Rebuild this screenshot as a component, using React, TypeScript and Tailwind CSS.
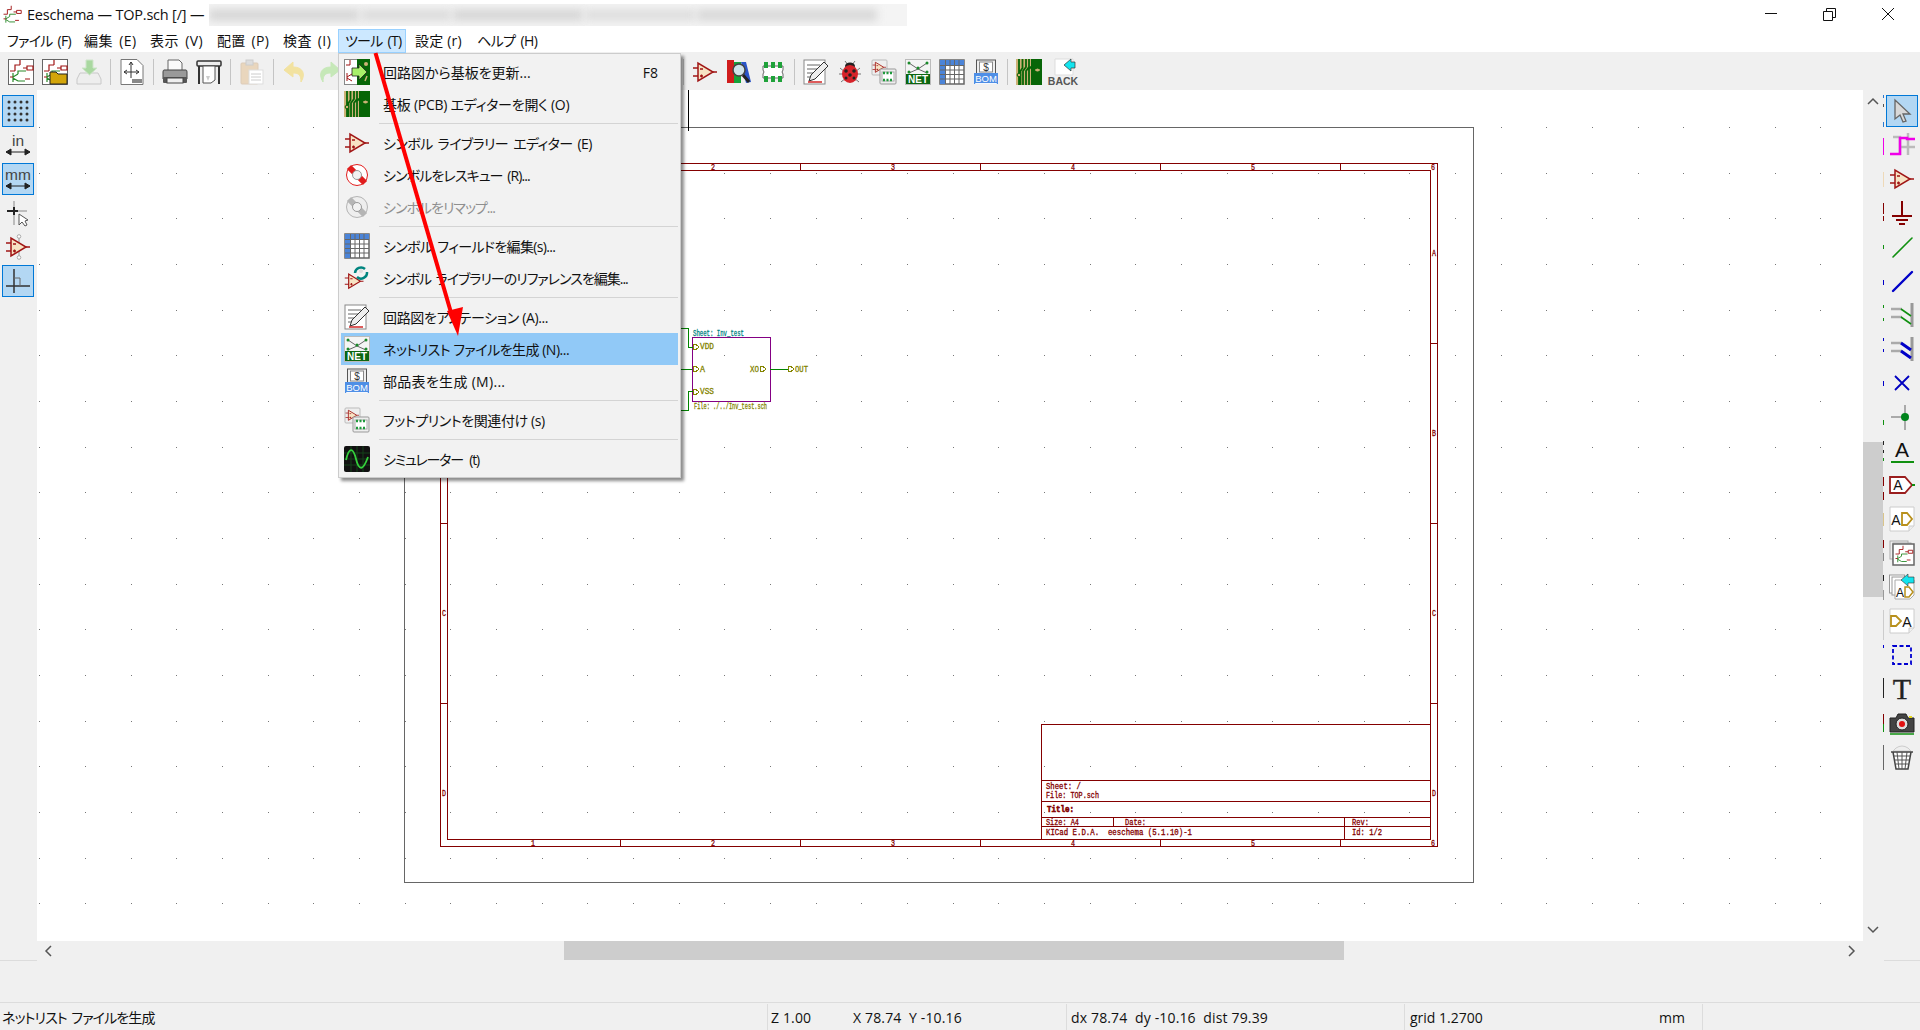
import React from 'react';

const MAROON = '#840000';
const Svg: React.FC<{ size?: number; children: React.ReactNode }> = ({ size = 26, children }) => (
  <svg width={size} height={size} viewBox="0 0 26 26" className="block shrink-0 overflow-visible">{children}</svg>
);

const SymbolShape = () => (
  <g>
    <polygon points="6,4 6,22 21,13" fill="#f7e3c4" stroke="#a01515" strokeWidth="1.5" />
    <path d="M1 9h5M1 17h5M21 13h4M8 10h3M8 17h3M9.500 15.500v3" stroke="#a01515" strokeWidth="1.3" fill="none" />
  </g>
);
const SymbolIcon = () => <Svg><SymbolShape /></Svg>;

const SchContent = () => (
  <g fill="none" strokeWidth="1.2">
    <path d="M12 1v5M12 6h-5v6M7 12h-5M15 9h4M19 7h6v4h-6z" stroke="#a01515" />
    <path d="M5 14v9M5 18l5-3M5 19l5 3M10 15v-3h8M10 22h7" stroke="#2a8a2a" />
    <path d="M2 18h3M17 20h5" stroke="#a01515" />
  </g>
);
const NewSch = () => (
  <Svg>
    <rect x="0.500" y="0.500" width="25" height="25" fill="#fff" stroke="#666" />
    <SchContent />
  </Svg>
);
const OpenSch = () => (
  <Svg>
    <rect x="0.500" y="0.500" width="25" height="25" fill="#fff" stroke="#666" />
    <SchContent />
    <path d="M8 13h6l2 2h9v10H8z" fill="#d3a50a" stroke="#222" />
  </Svg>
);
const SaveIcon = () => (
  <Svg>
    <path d="M4 14h18l3 6v5H1v-5z" fill="#eee" stroke="#c8c8c8" />
    <path d="M10 1h7v8h4l-7.500 7L6 9h4z" fill="#a9d8a0" stroke="#cfe5cb" />
  </Svg>
);
const PageIcon = () => (
  <Svg>
    <path d="M2 .500h16l6 6v19H2z" fill="#fff" stroke="#777" />
    <path d="M12 3v16M5 13h15M12 3l-2 3M12 3l2 3M5 13l3-2M5 13l3 2M20 13l-3-2M20 13l-3 2" stroke="#333" fill="none" />
    <rect x="13" y="20" width="10" height="4" fill="#888" />
  </Svg>
);
const PrintIcon = () => (
  <Svg>
    <path d="M6 1h11l3 3v8H6z" fill="#fafafa" stroke="#666" />
    <path d="M2 11h22q1 0 1 2v7H1v-7q0-2 1-2z" fill="#999" stroke="#444" />
    <rect x="1" y="18" width="24" height="6" rx="1" fill="#555" />
    <rect x="5" y="19" width="16" height="5" fill="#eee" stroke="#444" />
  </Svg>
);
const PlotIcon = () => (
  <Svg>
    <rect x="1" y="2" width="24" height="5" rx="1" fill="#eee" stroke="#333" strokeWidth="1.500" />
    <path d="M3 7v18M23 7v18" stroke="#333" strokeWidth="2" />
    <path d="M7 7h12v14l-4 3H7z" fill="#fff" stroke="#555" />
    <path d="M10 17h4l-2 5z" fill="#ccc" />
  </Svg>
);
const PasteIcon = () => (
  <Svg>
    <rect x="2" y="4" width="17" height="21" rx="1" fill="#e9d6bd" stroke="#dccbb8" />
    <rect x="7" y="1" width="7" height="5" fill="#ddd" stroke="#ccc" />
    <rect x="10" y="11" width="14" height="14" fill="#fff" stroke="#ddd" />
    <path d="M12 15h10M12 18h10M12 21h10" stroke="#ccc" />
  </Svg>
);
const UndoIcon: React.FC<{ color: string; flip?: boolean }> = ({ color, flip }) => (
  <Svg>
    <g transform={flip ? 'translate(26 0) scale(-1 1)' : undefined}>
      <path d="M11 3L2 11l9 7v-4c6 0 8 2 8 9 5-8 2-15-8-15z" fill={color} stroke={color} strokeLinejoin="round" />
    </g>
  </Svg>
);
const PcbIcon = () => (
  <Svg>
    <rect width="26" height="26" fill="#cdb277" />
    <path d="M15 0h11v26H15z" fill="#076507" />
    <path d="M3 0v26M6.500 0v9l-2 3v14M10 0v8l-3 4v14M13 0v8l-3 4v14M16 0v7l-3 3v16" stroke="#076507" strokeWidth="1.800" fill="none" />
    <path d="M19 11h5" stroke="#cdb277" strokeWidth="1.300" />
    <circle cx="21.500" cy="11" r="1.600" fill="#cdb277" />
    <circle cx="3" cy="16" r="1.800" fill="#cdb277" stroke="#076507" />
  </Svg>
);
const UpdatePcb = () => (
  <Svg>
    <rect x="0.500" y="0.500" width="13" height="25" fill="#fff" stroke="#888" />
    <rect x="13" width="13" height="26" fill="#076507" />
    <path d="M6 1v5H2M3 14v8M3 18l5-3M3 19l5 3" stroke="#a01515" fill="none" />
    <circle cx="22" cy="5" r="2" fill="#cdb277" />
    <path d="M21 22l2-5" stroke="#cdb277" strokeWidth="1.500" />
    <path d="M8 9h7V5l8 8-8 8v-4H8z" fill="#a8f06a" stroke="#222" strokeWidth="0.800" />
  </Svg>
);
const Buoy: React.FC<{ a: string; b: string }> = ({ a, b }) => (
  <Svg>
    <circle cx="13" cy="13" r="10" fill={b} stroke={b} strokeWidth="2" />
    <path d="M5 5l6 6M15 15l6 6" stroke={a} strokeWidth="6" />
    <circle cx="13" cy="13" r="10.500" fill="none" stroke={a} strokeWidth="1" />
    <circle cx="13" cy="13" r="4.500" fill="#f2f2f2" stroke="#999" />
  </Svg>
);
const TableIcon = () => (
  <Svg>
    <rect x="1" y="1" width="24" height="24" fill="#fff" stroke="#666" strokeWidth="1.500" />
    <rect x="1" y="1" width="24" height="5" fill="#4b84d8" />
    <rect x="1" y="1" width="5" height="24" fill="#4b84d8" />
    <path d="M6.500 1v24M11 1v24M15.500 1v24M20 1v24M1 6.500h24M1 11h24M1 15.500h24M1 20h24" stroke="#666" fill="none" />
  </Svg>
);
const SymRefIcon = () => (
  <Svg>
    <g transform="translate(0 6) scale(.78)"><SymbolShape /></g>
    <path d="M11 8a6 6 0 0 1 10-4M23 7a6 6 0 0 1-10 5" fill="none" stroke="#00857f" strokeWidth="2.500" />
    <circle cx="17" cy="6" r="2" fill="#ddd" />
  </Svg>
);
const AnnotateIcon = () => (
  <Svg>
    <rect x="1" y="1" width="21" height="24" fill="#fff" stroke="#888" />
    <path d="M4 6h13M4 10h10M4 14h7M4 18h4" stroke="#666" fill="none" />
    <path d="M21 3l4 4L12 20l-6 2 2-6z" fill="#eee" stroke="#333" />
    <path d="M5 23h14" stroke="#d01616" strokeWidth="1.400" />
  </Svg>
);
const NetIcon = () => (
  <Svg>
    <rect x="0.500" y="0.500" width="25" height="25" fill="#f4f4f4" stroke="#bbb" />
    <path d="M4 4l9 6 9-6M4 14l9-4 9 4" stroke="#666" fill="none" />
    <g fill="#1a8a2a">
      <circle cx="4" cy="4" r="1.500" /><circle cx="22" cy="4" r="1.500" /><circle cx="13" cy="9" r="1.500" />
      <circle cx="4" cy="13" r="1.500" /><circle cx="22" cy="13" r="1.500" />
    </g>
    <rect x="1" y="15" width="24" height="10" fill="#0b660f" />
    <text x="13" y="24" textAnchor="middle" fontSize="10" fontWeight="700" fill="#fff" fontFamily="Liberation Sans, sans-serif">NET</text>
  </Svg>
);
const BomIcon = () => (
  <Svg>
    <rect x="3.500" y="1" width="19" height="14" fill="#eee" stroke="#555" />
    <rect x="6.500" y="3" width="13" height="10" fill="#fff" stroke="#888" />
    <text x="13" y="12" textAnchor="middle" fontSize="10" fill="#333" fontFamily="Liberation Sans, sans-serif">$</text>
    <rect x="1" y="14" width="24" height="11" fill="#4f8fe6" />
    <text x="13" y="23" textAnchor="middle" fontSize="9.500" fill="#fff" textDecoration="underline" fontFamily="Liberation Sans, sans-serif">BOM</text>
  </Svg>
);
const CvpcbIcon = () => (
  <Svg>
    <rect x="1" y="1" width="15" height="15" rx="1" fill="#eee" stroke="#bbb" />
    <g transform="translate(1 1) scale(.56)"><SymbolShape /></g>
    <rect x="9" y="10" width="16" height="15" rx="1" fill="#eee" stroke="#999" />
    <rect x="11" y="13" width="12" height="9" fill="#fff" stroke="#aaa" />
    <path d="M12 14h2M15.500 14h2M19 14h2M12 21h2M15.500 21h2M19 21h2" stroke="#1f9a3c" strokeWidth="2.500" />
  </Svg>
);
const SimIcon = () => (
  <Svg>
    <rect width="26" height="26" rx="2" fill="#111" />
    <path d="M0 7h26M0 13h26M0 19h26M7 0v26M13 0v26M19 0v26" stroke="#14431a" />
    <path d="M2 14C5 1 9 1 12 13s7 12 12-2" fill="none" stroke="#35d03c" strokeWidth="1.800" />
  </Svg>
);
const LibBrowser = () => (
  <Svg>
    <rect x="1" y="1" width="7" height="23" fill="#d01c1c" />
    <rect x="8" y="3" width="7" height="21" fill="#17a23a" />
    <path d="M15 3l5 0 5 20-5 1z" fill="#2a55c8" />
    <circle cx="13" cy="11" r="6" fill="#cfe3ea" stroke="#444" strokeWidth="1.500" />
    <path d="M17 16l6 7" stroke="#222" strokeWidth="3" />
  </Svg>
);
const ChipIcon = () => (
  <Svg>
    <path d="M3 7h20v4l-1 2 1 2v4H3v-4l1-2-1-2z" fill="#fff" stroke="#666" />
    <g fill="#1fa23a">
      <rect x="4" y="3" width="4" height="6" /><rect x="11" y="3" width="4" height="6" /><rect x="18" y="3" width="4" height="6" />
      <rect x="4" y="17" width="4" height="6" /><rect x="11" y="17" width="4" height="6" /><rect x="18" y="17" width="4" height="6" />
    </g>
  </Svg>
);
const BugIcon = () => (
  <Svg>
    <path d="M3 9l5 4M23 9l-5 4M2 15h5M24 15h-5M4 23l5-4M22 23l-5-4M8 2l3 4M18 2l-3 4" stroke="#777" fill="none" />
    <ellipse cx="13" cy="7" rx="5" ry="3.500" fill="#222" />
    <ellipse cx="13" cy="15" rx="8" ry="9" fill="#d6232a" />
    <g fill="#222"><circle cx="9" cy="12" r="1.800" /><circle cx="17" cy="12" r="1.800" /><circle cx="13" cy="16" r="1.800" /><circle cx="9" cy="19" r="1.500" /><circle cx="17" cy="19" r="1.500" /></g>
  </Svg>
);
const BackIcon = () => (
  <Svg>
    <path d="M5 0h18v16H5z" fill="#fff" stroke="#ddd" />
    <path d="M14 6l7-6v3h4v6h-4v3z" fill="#12e4ee" stroke="#333" strokeWidth="0.700" />
    <text x="13" y="25.500" textAnchor="middle" fontSize="10.500" fontWeight="700" fill="#555" fontFamily="Liberation Sans, sans-serif">BACK</text>
  </Svg>
);

// left toolbar
const GridIcon = () => (
  <Svg>
    {[4, 10, 16, 22].flatMap((y) => [4, 10, 16, 22].map((x) => <circle key={`${x}-${y}`} cx={x} cy={y} r="1.500" fill="#333" />))}
  </Svg>
);
const UnitIcon: React.FC<{ t: string }> = ({ t }) => (
  <Svg>
    <text x="13" y="14" textAnchor="middle" fontSize="15.500" fill="#444" fontFamily="Liberation Sans, sans-serif">{t}</text>
    <path d="M1 20h24M1 20l5-3v6zM25 20l-5-3v6z" stroke="#222" fill="#222" />
  </Svg>
);
const CursorCross = () => (
  <Svg>
    <path d="M9 1v8M9 13v12M13 11h9" stroke="#aaa" strokeWidth="1.500" />
    <path d="M2 11h11M9 7v8" stroke="#222" strokeWidth="2" />
    <path d="M14 14l0 11 3-3 3 4 2-1-2-4 3-1z" fill="#fff" stroke="#555" />
  </Svg>
);
const SymPinIcon = () => (
  <Svg>
    <path d="M14 2v22" stroke="#aaa" strokeWidth="1.300" />
    <circle cx="14" cy="2.500" r="1.800" fill="#fff" stroke="#aaa" />
    <circle cx="14" cy="23.500" r="1.800" fill="#fff" stroke="#aaa" />
    <SymbolShape />
  </Svg>
);
const AngleIcon = () => (
  <Svg>
    <path d="M9 1v24M1 18h24" stroke="#333" strokeWidth="1.500" fill="none" />
    <path d="M9 10h6v8" stroke="#666" fill="none" />
  </Svg>
);

// right toolbar
const ArrowIcon = () => (
  <Svg><path d="M6 2v19l5-4 3 7 3-1-3-7h7z" fill="#d8d8d8" stroke="#666" strokeWidth="1.300" /></Svg>
);
const HighlightIcon = () => (
  <Svg>
    <path d="M4 5h7v18M19 1v22M10 15h16" stroke="#bbb" strokeWidth="2.500" fill="none" />
    <path d="M1 22h10V6h7v1h8" stroke="#f000e8" strokeWidth="2.500" fill="none" />
  </Svg>
);
const PowerIcon = () => (
  <Svg><path d="M13 1v15M3 16h20M7 20h12M10 24h6" stroke="#840000" strokeWidth="2" fill="none" /></Svg>
);
const WireLine: React.FC<{ c: string; w: number }> = ({ c, w }) => (
  <Svg><path d="M4 23L23 4" stroke={c} strokeWidth={w} strokeLinecap="round" /></Svg>
);
const EntryIcon: React.FC<{ c: string; w: number }> = ({ c, w }) => (
  <Svg>
    <path d="M23 1v24" stroke="#999" strokeWidth="3" />
    <path d="M2 7h11M2 15h11" stroke="#aaa" strokeWidth="2.500" />
    <path d="M12 7l10 7M12 15l10 7" stroke={c} strokeWidth={w} />
  </Svg>
);
const NoConn = () => <Svg><path d="M6 6l14 14M20 6L6 20" stroke="#0000c0" strokeWidth="1.800" /></Svg>;
const Junction = () => (
  <Svg>
    <path d="M16 1v25M2 13h14" stroke="#aaa" strokeWidth="2" />
    <circle cx="16" cy="13" r="4" fill="#00841c" />
  </Svg>
);
const Letter: React.FC<{ x: number; y: number; s: number }> = ({ x, y, s }) => (
  <text x={x} y={y} textAnchor="middle" fontSize={s} fill="#111" fontFamily="Liberation Sans, sans-serif">A</text>
);
const LabelIcon = () => (
  <Svg><Letter x={13} y={19} s={21} /><path d="M2 24h23" stroke="#109010" strokeWidth="2" /></Svg>
);
const GlobalIcon = () => (
  <Svg>
    <path d="M1 5h15l7 8-7 8H1z" fill="#fff" stroke="#9a1d1d" strokeWidth="1.800" />
    <path d="M23 13h3" stroke="#109010" strokeWidth="2" />
    <Letter x={9} y={18} s={14} />
  </Svg>
);
const SheetPage: React.FC<{ children: React.ReactNode }> = ({ children }) => (
  <>
    <path d="M1 1h24v19l-5 5H1z" fill="#fff" stroke="#ccc" />
    <path d="M25 20h-5v5" fill="#eee" stroke="#ccc" />
    {children}
  </>
);
const HierIcon = () => (
  <Svg>
    <SheetPage>
      <Letter x={7} y={19} s={14} />
      <path d="M13 7h5l5 6-5 6h-5z" fill="#fff" stroke="#b8901c" strokeWidth="1.800" />
    </SheetPage>
  </Svg>
);
const HierPin = () => (
  <Svg>
    <SheetPage>
      <path d="M2 8h5l5 5-5 5H2z" fill="#fff" stroke="#b8901c" strokeWidth="1.800" />
      <Letter x={18} y={19} s={14} />
    </SheetPage>
  </Svg>
);
const SheetIcon = () => (
  <Svg>
    <rect x="1" y="1" width="18" height="18" fill="#eee" stroke="#aaa" />
    <rect x="4" y="3" width="18" height="19" fill="#eee" stroke="#aaa" />
    <rect x="4" y="4" width="21" height="21" fill="#fff" stroke="#666" strokeWidth="1.500" />
    <g transform="translate(5 5) scale(.75)"><SchContent /></g>
  </Svg>
);
const ImportIcon = () => (
  <Svg>
    <rect x="0.500" y="1" width="15" height="18" fill="#fff" stroke="#999" />
    <rect x="3" y="3" width="15" height="18" fill="#fff" stroke="#999" />
    <path d="M6 6h19v15l-4 4H6z" fill="#fff" stroke="#aaa" />
    <Letter x={11} y={23} s={12} />
    <path d="M16 13h4l4 5-4 5h-4z" fill="#fff" stroke="#b8901c" strokeWidth="1.500" />
    <path d="M12 6l7-6v3h6v6h-6v3z" fill="#12e4ee" stroke="#333" strokeWidth="0.600" />
  </Svg>
);
const DashIcon = () => <Svg><rect x="4" y="4" width="18" height="18" fill="none" stroke="#0000d0" strokeWidth="1.800" strokeDasharray="4 2.500" /></Svg>;
const TIcon = () => (
  <Svg><text x="13" y="23" textAnchor="middle" fontSize="30" fill="#222" stroke="#222" strokeWidth="0.300" fontFamily="Liberation Serif, serif">T</text></Svg>
);
const CameraIcon = () => (
  <Svg>
    <path d="M1 8h6l2-4h8l2 4h6v14H1z" fill="#444" stroke="#222" />
    <rect x="20" y="6" width="3" height="2" fill="#e6d71c" />
    <circle cx="13" cy="14" r="6" fill="#ddd" stroke="#222" />
    <circle cx="13" cy="14" r="3" fill="#e01010" />
    <path d="M1 24h24" stroke="#109010" strokeWidth="1.500" />
  </Svg>
);
const TrashIcon = () => (
  <Svg>
    <path d="M7 4q6-4 12 0l3 3H4z" fill="#eee" stroke="#ccc" />
    <path d="M2 8h22M4 8l3 17h12l3-17" fill="#fff" stroke="#444" strokeWidth="1.500" />
    <path d="M8 8l2 17M13 8v17M18 8l-2 17M5 12h16M6 16h14M6.500 20h13" stroke="#555" />
  </Svg>
);

const Sep = () => (
  <div className="flex w-[9px] justify-center"><div className="h-[26px] w-px bg-[#c4c4c4]" /></div>
);
const Tb: React.FC<{ children: React.ReactNode }> = ({ children }) => (
  <div className="flex h-[38px] w-[34px] items-center justify-center">{children}</div>
);

const SideItem: React.FC<{ active?: boolean; children: React.ReactNode }> = ({ active, children }) => (
  <div className="flex h-[34px] items-center justify-center">
    <div className={active ? 'flex h-[32px] w-[32px] items-center justify-center border border-[#0078d7] bg-[#b3d7f3]' : 'flex h-[32px] w-[32px] items-center justify-center'}>
      {children}
    </div>
  </div>
);

const menuBar = [
  { t: 'ファイル (F)', w: 'w-[77px] tracking-[-0.7px]' },
  { t: '編集 (E)', w: 'w-[66px] tracking-[0.5px]' },
  { t: '表示 (V)', w: 'w-[67px] tracking-[0.5px]' },
  { t: '配置 (P)', w: 'w-[66px] tracking-[0.3px]' },
  { t: '検査 (I)', w: 'w-[62px] tracking-[0.4px]' },
];

// the original's kana are narrower than Noto's, hence a tracking per row
type MenuRow = { icon: React.ReactNode; label: string; track: string; key?: string; disabled?: boolean; active?: boolean };
const menuGroups: MenuRow[][] = [
  [
    { icon: <UpdatePcb />, label: '回路図から基板を更新...', track: 'tracking-[0px]', key: 'F8' },
    { icon: <PcbIcon />, label: '基板 (PCB) エディターを開く (O)', track: 'tracking-[-0.25px]' },
  ],
  [
    { icon: <SymbolIcon />, label: 'シンボル ライブラリー エディター (E)', track: 'tracking-[-0.6px] [word-spacing:2px]' },
    { icon: <Buoy a="#e01c1c" b="#fff" />, label: 'シンボルをレスキュー (R)...', track: 'tracking-[-0.9px] [word-spacing:2px]' },
    { icon: <Buoy a="#b5b5b5" b="#eee" />, label: 'シンボルをリマップ...', track: 'tracking-[-1px]' , disabled: true },
  ],
  [
    { icon: <TableIcon />, label: 'シンボル フィールドを編集(s)...', track: 'tracking-[-0.65px] [word-spacing:2px]' },
    { icon: <SymRefIcon />, label: 'シンボル ライブラリーのリファレンスを編集...', track: 'tracking-[-1px] [word-spacing:2px]' },
  ],
  [
    { icon: <AnnotateIcon />, label: '回路図をアノテーション (A)...', track: 'tracking-[-0.35px]' },
    { icon: <NetIcon />, label: 'ネットリスト ファイルを生成 (N)...', track: 'tracking-[-0.5px]', active: true },
    { icon: <BomIcon />, label: '部品表を生成 (M)...', track: 'tracking-[0.3px]' },
  ],
  [{ icon: <CvpcbIcon />, label: 'フットプリントを関連付け (s)', track: 'tracking-[-0.4px]' }],
  [{ icon: <SimIcon />, label: 'シミュレーター (t)', track: 'tracking-[-1.2px] [word-spacing:4px]' }],
];

const rightIcons: React.ReactNode[] = [
  <ArrowIcon />, <HighlightIcon />, <SymbolIcon />, <PowerIcon />, <WireLine c="#109010" w={1.6} />,
  <WireLine c="#0000c8" w={2.4} />, <EntryIcon c="#109010" w={1.6} />, <EntryIcon c="#0000c8" w={3} />,
  <NoConn />, <Junction />, <LabelIcon />, <GlobalIcon />, <HierIcon />, <SheetIcon />, <ImportIcon />,
  <HierPin />, <DashIcon />, <TIcon />, <CameraIcon />, <TrashIcon />,
];

// leftovers of the canvas repaint next to the right toolbar: [y, height, colour]
const slivers: [number, number, string][] = [
  [95, 3, '#2a7ad0'], [104, 3, '#555'], [122, 5, '#2a7ad0'], [138, 17, '#f000e8'], [172, 15, '#eed9b8'],
  [203, 11, MAROON], [216, 5, MAROON], [245, 4, '#109010'], [280, 5, '#0000c8'], [305, 3, '#109010'],
  [318, 3, '#109010'], [338, 3, '#0000c8'], [349, 3, '#0000c8'], [381, 5, '#0000c8'], [420, 5, '#109010'],
  [441, 4, '#222'], [450, 3, '#222'], [458, 3, '#109010'], [477, 9, MAROON], [492, 8, MAROON], [513, 13, '#d9c48a'],
  [540, 8, MAROON], [553, 8, '#888'], [575, 6, '#222'], [590, 10, '#999'], [610, 30, '#ccc'], [645, 3, '#0000d0'],
  [678, 20, '#222'], [714, 10, MAROON], [724, 8, '#109010'], [745, 25, '#666'],
];

const gridX = Array.from({ length: 40 }, (_, i) => Math.round(39.3 + i * 45.67));
const gridY = Array.from({ length: 19 }, (_, i) => Math.round(127 + i * 45.67));

const Stroke: React.FC<{ x: number; y: number; w: number; c?: string; bold?: boolean; children: React.ReactNode }> = ({ x, y, w, c = MAROON, bold, children }) => (
  <text x={x} y={y} textLength={w} lengthAdjust="spacingAndGlyphs" fontSize="8.500" fontWeight={bold ? 700 : 400} fill={c} stroke={c} strokeWidth={bold ? 0.6 : 0.3} fontFamily="Liberation Mono, monospace" xmlSpace="preserve">
    {children}
  </text>
);

const PinMark: React.FC<{ x: number; y: number }> = ({ x, y }) => (
  <path d={`M${x} ${y - 2.500}h3l3 2.500-3 2.500h-3z`} fill="none" stroke="#848400" />
);

const Schematic = () => (
  <svg width="1826" height="851" viewBox="37 90 1826 851" className="block bg-white" shapeRendering="crispEdges">
    {gridY.map((y) => gridX.map((x) => <rect key={`${x}-${y}`} x={x} y={y} width="1" height="1" fill="#777" />))}
    {/* page outline and cursor */}
    <rect x="404.500" y="127.500" width="1069" height="755" fill="none" stroke="#666" />
    <path d="M688.500 90v41" stroke="#000" />
    {/* frame */}
    <g fill="none" stroke={MAROON}>
      <rect x="440.500" y="163.500" width="997" height="683" />
      <rect x="447.500" y="170.500" width="983" height="669" />
      <path d="M620.500 163v7M800.500 163v7M980.500 163v7M1160.500 163v7M1340.500 163v7M620.500 839v7M800.500 839v7M980.500 839v7M1160.500 839v7M1340.500 839v7" />
      <path d="M440 343.500h7M440 523.500h7M440 703.500h7M1430 343.500h7M1430 523.500h7M1430 703.500h7" />
      <path d="M1041.500 839V724.500H1430M1041 780.500h389M1041 801.500h389M1041 817.500h389M1041 826.500h389M1113.500 817v9M1344.500 817v22" />
    </g>
    {['2', '3', '4', '5'].map((n, i) => (
      <Stroke key={n} x={711 + i * 180} y={170} w={4}>{n}</Stroke>
    ))}
    {['1', '2', '3', '4', '5'].map((n, i) => (
      <Stroke key={n} x={531 + i * 180} y={846} w={4}>{n}</Stroke>
    ))}
    <Stroke x={1431} y={170} w={4}>6</Stroke>
    <Stroke x={1431} y={846} w={4}>6</Stroke>
    {['A', 'B', 'C', 'D'].map((n, i) => (
      <g key={n}>
        {i > 0 && <Stroke x={442} y={256 + i * 180} w={4}>{n}</Stroke>}
        <Stroke x={1432} y={256 + i * 180} w={4}>{n}</Stroke>
      </g>
    ))}
    {/* title block */}
    <Stroke x={1046} y={789} w={35}>Sheet: /</Stroke>
    <Stroke x={1046} y={798} w={53}>File: TOP.sch</Stroke>
    <Stroke x={1047} y={812} w={27} bold>Title:</Stroke>
    <Stroke x={1046} y={825} w={33}>Size: A4</Stroke>
    <Stroke x={1125} y={825} w={21}>Date:</Stroke>
    <Stroke x={1352} y={825} w={17}>Rev:</Stroke>
    <Stroke x={1046} y={835} w={146}>KICad E.D.A.  eeschema (5.1.10)-1</Stroke>
    <Stroke x={1352} y={835} w={30}>Id: 1/2</Stroke>
    {/* sheet symbol */}
    <rect x="692.500" y="337.500" width="78" height="64" fill="none" stroke="#840084" />
    <path d="M680 328.500h8.500v18.500h4M680 369.500h12M680 410.500h8.500V391h4M770 369.500h18" fill="none" stroke="#008400" />
    <Stroke x={693} y={336} w={51} c="#008484">Sheet: Inv_test</Stroke>
    <Stroke x={694} y={409} w={73} c="#848400">File: ./../Inv_test.sch</Stroke>
    <PinMark x={693} y={347} />
    <PinMark x={693} y={369} />
    <PinMark x={693} y={392} />
    <PinMark x={760} y={369} />
    <PinMark x={788} y={369} />
    <Stroke x={700} y={349} w={14} c="#848400">VDD</Stroke>
    <Stroke x={700} y={372} w={5} c="#848400">A</Stroke>
    <Stroke x={700} y={394} w={14} c="#848400">VSS</Stroke>
    <Stroke x={750} y={372} w={9} c="#848400">XO</Stroke>
    <Stroke x={795} y={372} w={13} c="#848400">OUT</Stroke>
  </svg>
);

export default function App() {
  return (
    <div className="relative flex h-[1030px] w-[1920px] flex-col overflow-hidden bg-[#f0f0f0] text-[14px] text-[#111] [font-family:'Open_Sans','Noto_Sans_CJK_JP',sans-serif] [font-feature-settings:'palt']">
      {/* title bar */}
      <div className="flex h-[29px] items-center bg-white">
        <div className="ml-[2px] flex w-[25px]"><Svg size={20}><SchContent /></Svg></div>
        <span className="text-[14.500px] tracking-[-0.2px]">Eeschema — TOP.sch [/] —</span>
        <div className="ml-[5px] flex h-[22px] w-[698px] items-center gap-[2px] overflow-hidden bg-[#f4f4f4]">
          <div className="h-[12px] w-[150px] bg-[#d6d6d6] blur-[4px]" />
          <div className="h-[12px] w-[90px] bg-[#dcdcdc] blur-[4px]" />
          <div className="h-[12px] w-[130px] bg-[#d6d6d6] blur-[4px]" />
          <div className="h-[12px] w-[110px] bg-[#dedede] blur-[4px]" />
          <div className="h-[12px] w-[180px] bg-[#d8d8d8] blur-[4px]" />
        </div>
        <div className="ml-auto flex items-center">
          <svg width="155" height="29" viewBox="1765 0 155 29" fill="none" stroke="#111" className="block">
            <path d="M1765 13.500h12" />
            <path d="M1823.500 11.500h9v9h-9zM1826.500 11.500v-3h9v9h-3" />
            <path d="M1882 8l12 12M1894 8l-12 12" />
          </svg>
        </div>
      </div>

      {/* menu bar */}
      <div className="flex h-[23px] items-center bg-white">
        {menuBar.map((m) => (
          <div key={m.t} className={`${m.w} pl-[7px] [word-spacing:2px]`}>{m.t}</div>
        ))}
        <div className="flex h-[24px] w-[68px] items-center border border-[#99d1ff] bg-[#cce8ff] pl-[6px] tracking-[-0.7px] [word-spacing:2px]">ツール (T)</div>
        <div className="ml-[2px] w-[62px] pl-[7px] tracking-[0.2px]">設定 (r)</div>
        <div className="pl-[7px] tracking-[-0.6px] [word-spacing:2px]">ヘルプ (H)</div>
      </div>

      {/* main toolbar */}
      <div className="flex h-[38px] items-center pl-[4px] pt-[1px]">
        <Tb><NewSch /></Tb><Tb><OpenSch /></Tb><Tb><SaveIcon /></Tb><Sep />
        <Tb><PageIcon /></Tb><Sep />
        <Tb><PrintIcon /></Tb><Tb><PlotIcon /></Tb><Sep />
        <Tb><PasteIcon /></Tb><Sep />
        <Tb><UndoIcon color="#f2e2a0" /></Tb><Tb><UndoIcon color="#c6e8b8" flip /></Tb>
        <div className="w-[333px]" />
        <Sep />
        <Tb><SymbolIcon /></Tb><Tb><LibBrowser /></Tb><Tb><ChipIcon /></Tb><Sep />
        <Tb><AnnotateIcon /></Tb><Tb><BugIcon /></Tb><Tb><CvpcbIcon /></Tb><Tb><NetIcon /></Tb><Tb><TableIcon /></Tb><Tb><BomIcon /></Tb><Sep />
        <Tb><PcbIcon /></Tb><Tb><BackIcon /></Tb>
      </div>

      {/* work area */}
      <div className="flex h-[871px]">
        <div className="flex w-[37px] flex-col border-b border-[#dcdcdc] pr-[1px] pt-[4px]">
          <SideItem active><GridIcon /></SideItem>
          <SideItem><UnitIcon t="in" /></SideItem>
          <SideItem active><UnitIcon t="mm" /></SideItem>
          <SideItem><CursorCross /></SideItem>
          <SideItem><SymPinIcon /></SideItem>
          <SideItem active><AngleIcon /></SideItem>
        </div>

        <div className="flex w-[1847px] flex-col">
          <div className="flex h-[851px]">
            <Schematic />
            <div className="relative flex w-[21px] flex-col items-center justify-between py-[7px] pr-[2px]">
              <svg width="12" height="8" viewBox="0 0 12 8" fill="none" stroke="#555" strokeWidth="1.500"><path d="M1 7l5-5 5 5" /></svg>
              <div className="absolute left-0 top-[352px] h-[155px] w-[20px] bg-[#cdcdcd]" />
              <svg width="12" height="8" viewBox="0 0 12 8" fill="none" stroke="#555" strokeWidth="1.500"><path d="M1 1l5 5 5-5" /></svg>
              {slivers.map(([y, h, c]) => (
                <div key={y} className="absolute right-0 w-px" style={{ top: y - 90, height: h, background: c }} />
              ))}
            </div>
          </div>
          <div className="relative flex h-[20px] items-center justify-between px-[7px]">
            <svg width="8" height="12" viewBox="0 0 8 12" fill="none" stroke="#555" strokeWidth="1.500"><path d="M7 1L2 6l5 5" /></svg>
            <div className="absolute left-[527px] top-0 h-[19px] w-[780px] bg-[#cdcdcd]" />
            <svg width="8" height="12" viewBox="0 0 8 12" fill="none" stroke="#555" strokeWidth="1.500" className="mr-[21px]"><path d="M1 1l5 5-5 5" /></svg>
          </div>
        </div>

        <div className="flex w-[36px] flex-col border-b border-[#dcdcdc] pt-[4px]">
          {rightIcons.map((ic, i) => (
            <SideItem key={i} active={i === 0}>{ic}</SideItem>
          ))}
        </div>
      </div>

      <div className="h-[41px]" />

      {/* status bar */}
      <div className="flex h-[28px] items-center border-t border-[#dcdcdc] pt-[1px] text-[14px]">
        <div className="w-[767px] pl-[2px] tracking-[-0.9px] [word-spacing:2px]">ネットリスト ファイルを生成</div>
        <div className="flex h-full w-[299px] items-center border-l border-[#dcdcdc] pl-[3px] tracking-[0.15px]">
          <span className="w-[82px]">Z 1.00</span>
          <span>X 78.74&nbsp; Y -10.16</span>
        </div>
        <div className="flex h-full w-[338px] items-center border-l border-[#dcdcdc] pl-[4px] tracking-[0.15px]">dx 78.74&nbsp; dy -10.16&nbsp; dist 79.39</div>
        <div className="flex h-full w-[298px] items-center border-l border-[#dcdcdc] pl-[5px]">
          <span className="w-[249px]">grid 1.2700</span>
          <span>mm</span>
        </div>
        <div className="h-full border-l border-[#dcdcdc]" />
      </div>

      {/* open tools menu */}
      <div className="absolute left-[338px] top-[53px] w-[343px] border border-[#cccccc] bg-[#f2f2f2] px-[2px] py-[2px] shadow-[3px_3px_3px_rgba(0,0,0,0.45)]">
        {menuGroups.map((group, gi) => (
          <div key={gi}>
            {gi > 0 && (
              <div className="flex h-[7px] items-center pl-[38px]"><div className="h-px w-full bg-[#d4d4d4]" /></div>
            )}
            {group.map((row) => (
              <div key={row.label} className={row.active ? 'flex h-[32px] items-center bg-[#91c9f7] pl-[3px] pr-[20px]' : 'flex h-[32px] items-center pl-[3px] pr-[20px]'}>
                {row.icon}
                <span className={`${row.track} ${row.disabled ? 'ml-[13px] flex-1 text-[#8f8f8f]' : 'ml-[13px] flex-1'}`}>{row.label}</span>
                {row.key && <span>{row.key}</span>}
              </div>
            ))}
          </div>
        ))}
      </div>

      {/* red annotation arrow */}
      <svg width="1920" height="1030" viewBox="0 0 1920 1030" className="pointer-events-none absolute left-0 top-0">
        <path d="M375.500 53L452 316" stroke="#ff0000" strokeWidth="4" />
        <path d="M458 336l-11-25 16-4z" fill="#ff0000" />
      </svg>
    </div>
  );
}
